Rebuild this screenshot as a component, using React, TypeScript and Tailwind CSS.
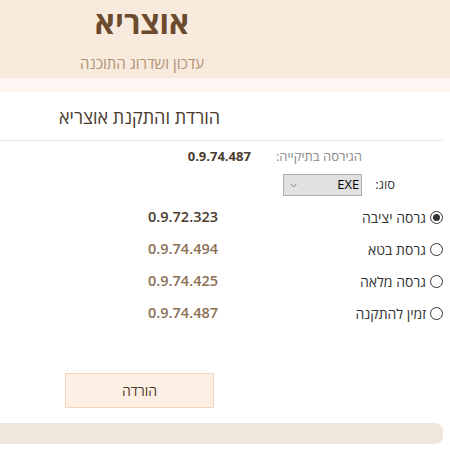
import { ChevronDown } from 'lucide-react';

const versions = [
  { label: 'גרסה יציבה', value: '0.9.72.323', checked: true },
  { label: 'גרסת בטא', value: '0.9.74.494', checked: false },
  { label: 'גרסה מלאה', value: '0.9.74.425', checked: false },
  { label: 'זמין להתקנה', value: '0.9.74.487', checked: false },
];

function Radio({ checked }: { checked: boolean }) {
  return (
    <span className="flex h-[13px] w-[13px] items-center justify-center rounded-full border border-[#333] bg-white">
      {checked && <span className="h-[7px] w-[7px] rounded-full bg-[#333]" />}
    </span>
  );
}

export default function App() {
  return (
    <div
      dir="rtl"
      className="h-[457px] w-[450px] overflow-hidden bg-white"
      style={{ fontFamily: '"Open Sans", "Liberation Sans", sans-serif' }}
    >
      {/* Header */}
      <div className="h-[78px] bg-[#f8eadd]">
        <div className="mr-[166px] flex w-[284px] flex-col items-center">
          <h1 className="mt-[1px] h-[42px] text-[31px] font-bold leading-[42px] text-[#6b4a2e]">אוצריא</h1>
          <p className="mt-[10px] text-[15px] leading-[20px] text-[#b29273]">עדכון ושדרוג התוכנה</p>
        </div>
      </div>
      <div className="h-[14px] bg-[#fdf6f2]" />

      {/* Section title */}
      <div className="pr-[230px] pt-[13px] text-[18px] leading-[24px] text-[#4a3b2e]">הורדת והתקנת אוצריא</div>
      <div className="mr-[7px] mt-[11px] h-px bg-[#efe6dc]" />

      {/* Current version */}
      <div className="mt-[5px] flex items-center gap-[25px] pr-[88px] text-[13px] leading-[20px]">
        <span className="text-[#8a8a8a]">הגירסה בתיקייה:</span>
        <span className="font-bold text-[#4a3b2e]">0.9.74.487</span>
      </div>

      {/* Type select */}
      <div className="mt-[8px] flex items-center gap-[13px] pr-[55px] text-[13px]">
        <span className="text-[#3a3a3a]">סוג:</span>
        <div className="flex h-[22px] w-[79px] items-center justify-between border border-[#adadad] bg-[#e1e1e1] pl-[4px] pr-[2px]">
          <span className="text-[13px] text-black">EXE</span>
          <ChevronDown className="h-[11px] w-[11px] text-[#555]" strokeWidth={1.5} />
        </div>
      </div>

      {/* Version options */}
      <div className="mt-[5px] flex flex-col">
        {versions.map((v) => (
          <div key={v.label} className="flex h-[32px] items-center">
            <div className="flex w-[232px] items-center gap-[4px] pr-[7px] text-[14px]">
              <Radio checked={v.checked} />
              <span className="text-[#333]">{v.label}</span>
            </div>
            <span className={v.checked ? 'text-[14.5px] font-semibold text-[#4a3b2e]' : 'text-[14.5px] font-semibold text-[#8c6f55]'}>
              {v.value}
            </span>
          </div>
        ))}
      </div>

      {/* Download button */}
      <div className="mt-[44px] flex pr-[236px]">
        <button className="h-[35px] w-[149px] border border-[#f0d4bc] bg-[#fdefe3] text-[14px] text-[#4a3b2e]">הורדה</button>
      </div>

      {/* Bottom bar */}
      <div className="mr-[7px] mt-[15px] h-[21px] rounded-r-[8px] bg-[#f1e6dc]" />
    </div>
  );
}
